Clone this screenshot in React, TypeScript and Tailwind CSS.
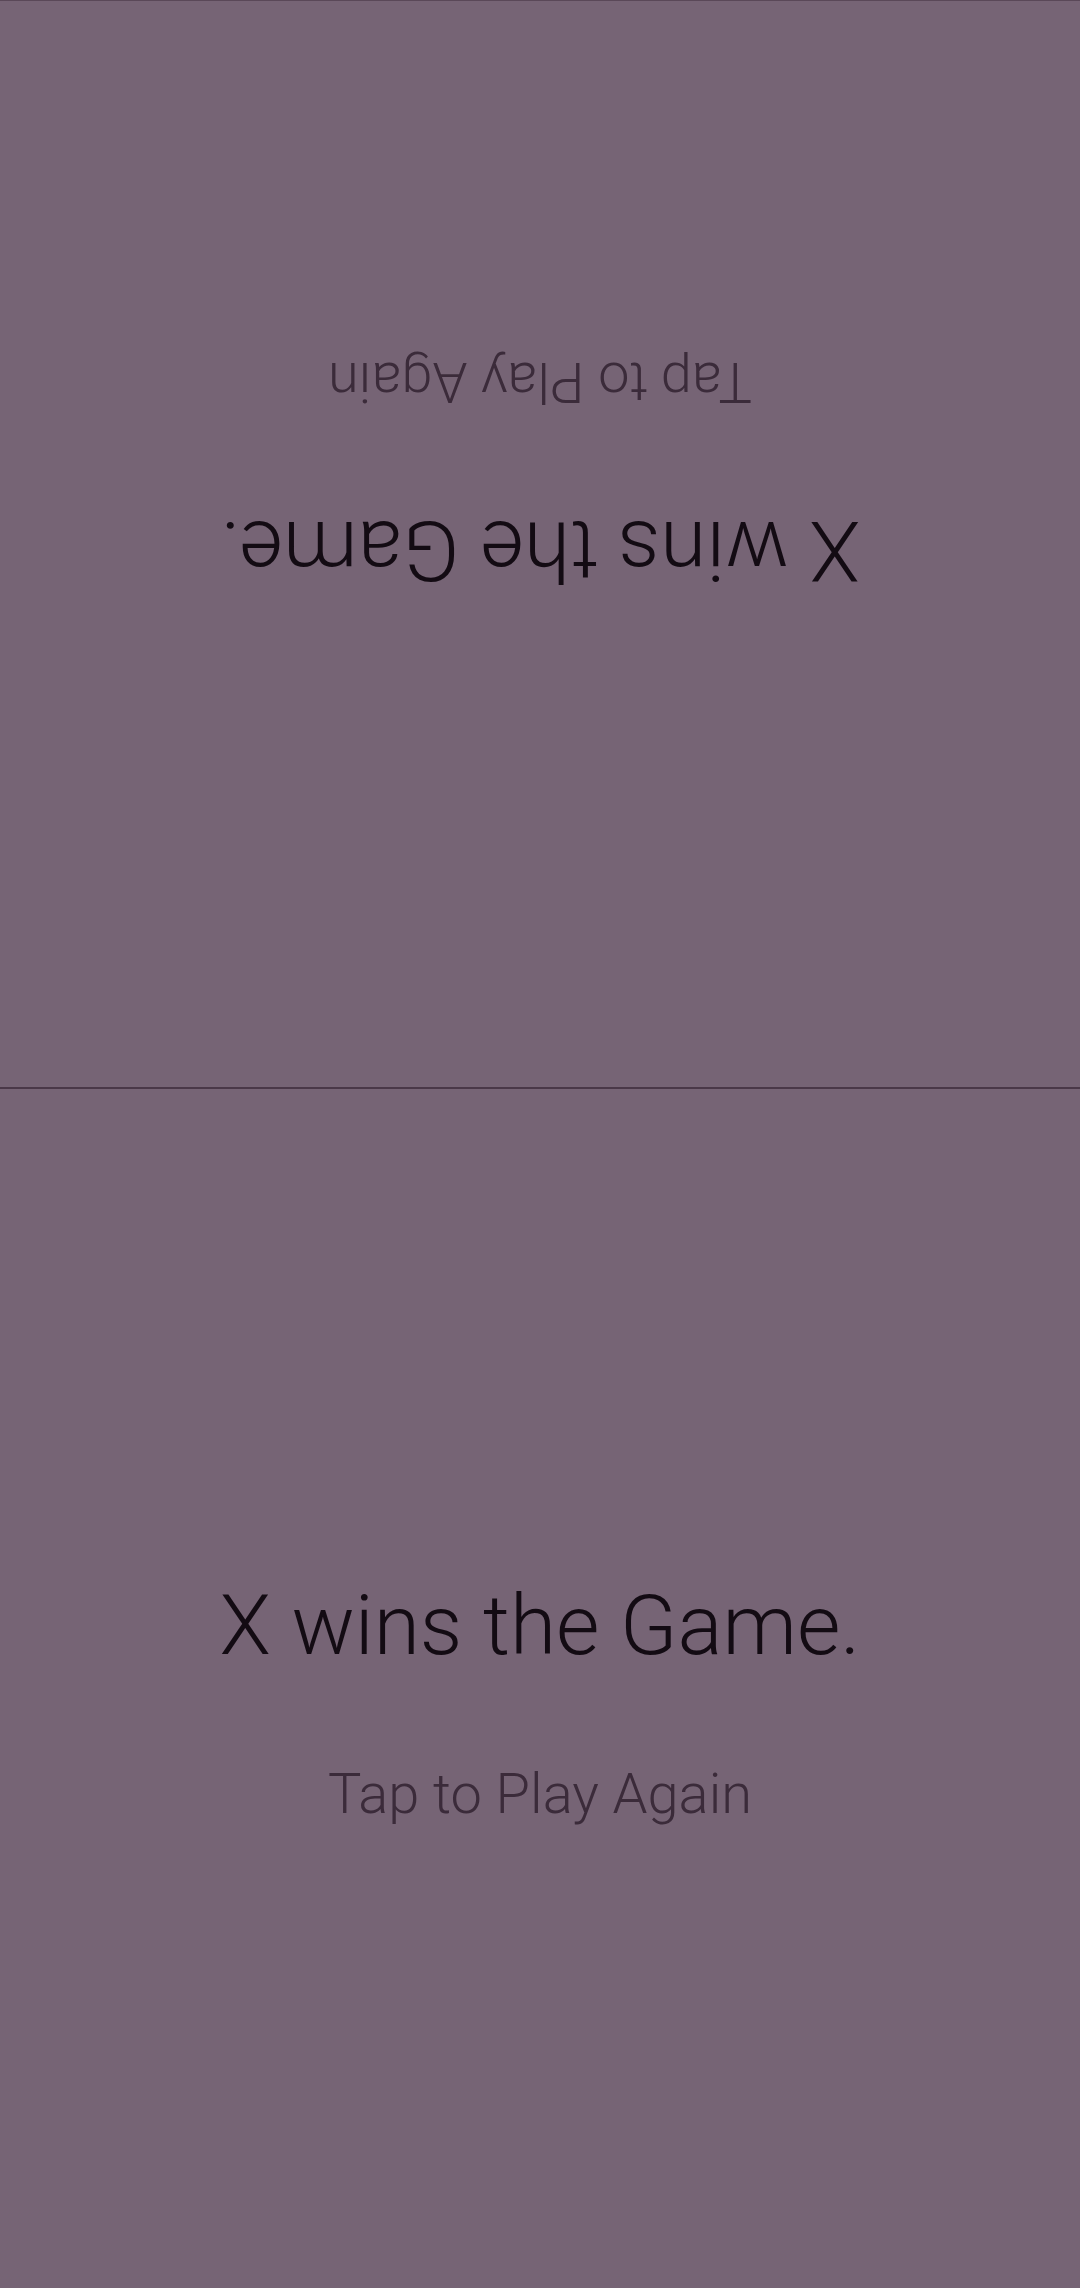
import React from "react";

function Half({ rotated }: { rotated?: boolean }) {
  return (
    <div
      className={
        rotated
          ? "h-[1086px] rotate-180 flex flex-col items-center pt-[495px]"
          : "flex-1 flex flex-col items-center pt-[495px]"
      }
    >
      <div className="text-[84px] leading-none font-light text-[#130b13] whitespace-nowrap">
        X wins the Game.
      </div>
      <div className="mt-[98px] text-[56px] leading-none font-light text-[#3b2b3a] whitespace-nowrap">
        Tap to Play Again
      </div>
    </div>
  );
}

export default function App() {
  return (
    <div
      className="w-[1080px] h-[2288px] bg-[#766475] flex flex-col border-t border-[#5a4858] overflow-hidden"
      style={{ fontFamily: "Roboto, 'Liberation Sans', sans-serif" }}
    >
      <Half rotated />
      <div className="h-[2px] bg-[#4a3848]" />
      <Half />
    </div>
  );
}
